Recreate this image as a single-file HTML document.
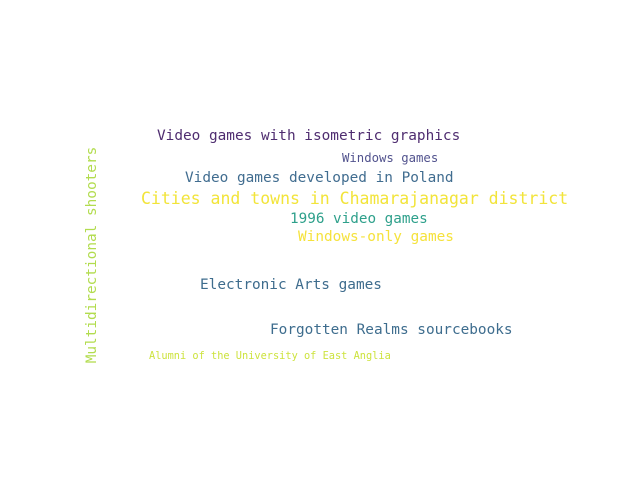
<!DOCTYPE html>
<html><head><style>
body{margin:0;width:640px;height:480px;background:#fff;position:relative;overflow:hidden;font-family:"DejaVu Sans Mono","Liberation Mono",monospace;}
div{position:absolute;white-space:nowrap;line-height:1;}
</style></head><body>
<div style="left:157px;top:128.5px;font-size:14.4px;color:#4f2d70">Video games with isometric graphics</div>
<div style="left:342px;top:151.5px;font-size:12.3px;color:#52538e">Windows games</div>
<div style="left:185px;top:170.5px;font-size:14.4px;color:#416d90">Video games developed in Poland</div>
<div style="left:141px;top:191.3px;font-size:16.5px;color:#f2e43a">Cities and towns in Chamarajanagar district</div>
<div style="left:290px;top:211.5px;font-size:14.3px;color:#2ea08b">1996 video games</div>
<div style="left:298px;top:229.5px;font-size:14.4px;color:#f5e23c">Windows-only games</div>
<div style="left:200px;top:277.5px;font-size:14.4px;color:#3e6c8d">Electronic Arts games</div>
<div style="left:270px;top:322.5px;font-size:14.4px;color:#3e6d8e">Forgotten Realms sourcebooks</div>
<div style="left:149px;top:350.5px;font-size:10.3px;color:#cde33e">Alumni of the University of East Anglia</div>
<div style="left:92px;top:255px;font-size:14.4px;color:#b2dc4e;transform:translate(-50%,-50%) rotate(-90deg);">Multidirectional shooters</div>
</body></html>
